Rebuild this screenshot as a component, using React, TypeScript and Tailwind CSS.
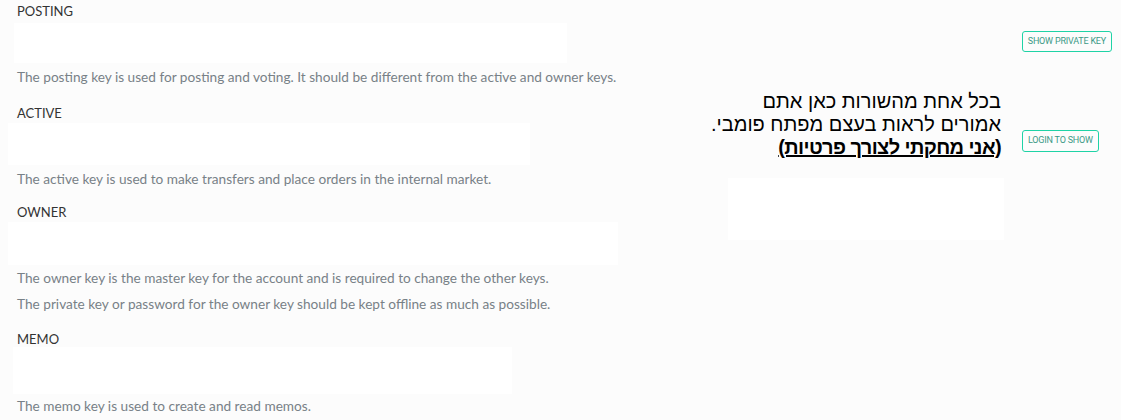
const Label = ({ children, className = '' }: { children: React.ReactNode; className?: string }) => (
  <div className={`pl-[17px] text-[13px] leading-[16px] text-[#333] ${className}`}>{children}</div>
);

const Desc = ({ children, className = '' }: { children: React.ReactNode; className?: string }) => (
  <p className={`pl-[17px] text-[13.65px] leading-[18px] text-[#788187] ${className}`}>{children}</p>
);

export default function App() {
  return (
    <div className="flex h-[420px] w-[1121px] bg-[#fcfcfc] font-['Lato',sans-serif] overflow-hidden">
      <div className="flex w-[640px] flex-col">
        <Label className="mt-[3px]">POSTING</Label>
        <div className="ml-[14px] mt-[4px] h-[40px] w-[553px] bg-white" />
        <Desc className="mt-[5px]">
          The posting key is used for posting and voting. It should be different from the active and owner keys.
        </Desc>
        <Label className="mt-[19px]">ACTIVE</Label>
        <div className="ml-[8px] mt-[2px] h-[42px] w-[522px] bg-white" />
        <Desc className="mt-[5px]">The active key is used to make transfers and place orders in the internal market.</Desc>
        <Label className="mt-[16px]">OWNER</Label>
        <div className="ml-[8px] mt-[2px] h-[43px] w-[610px] bg-white" />
        <Desc className="mt-[4px]">The owner key is the master key for the account and is required to change the other keys.</Desc>
        <Desc className="mt-[8px]">The private key or password for the owner key should be kept offline as much as possible.</Desc>
        <Label className="mt-[18px]">MEMO</Label>
        <div className="ml-[13px] h-[47px] w-[499px] bg-white" />
        <Desc className="mt-[3px]">The memo key is used to create and read memos.</Desc>
      </div>

      <div className="flex flex-1 flex-col">
        <div className="mt-[31px] flex justify-end pr-[9px]">
          <button className="h-[21px] rounded-[3px] border border-[#1fd3a6] px-[5px] font-['Roboto',sans-serif] text-[9px] tracking-[-0.2px] text-[#3b9a86]">
            SHOW PRIVATE KEY
          </button>
        </div>
        <div className="mt-[38px] flex">
          <div className="flex w-[361px] flex-col items-end">
            <div
              dir="rtl"
              className="font-['Liberation_Sans','Noto_Sans',sans-serif] text-[20px] leading-[23px] text-black"
            >
              בכל אחת מהשורות כאן אתם
              <br />
              אמורים לראות בעצם מפתח פומבי.
              <br />
              <a href="#" className="font-bold underline tracking-[-0.6px]">(אני מחקתי לצורך פרטיות)</a>
            </div>
            <div className="mt-[19px] mr-[-3px] h-[62px] w-[276px] bg-white" />
          </div>
          <div className="ml-[21px] mt-[35px]">
            <button className="h-[22px] rounded-[3px] border border-[#1fd3a6] px-[5px] font-['Roboto',sans-serif] text-[9px] tracking-[-0.2px] text-[#3b9a86]">
              LOGIN TO SHOW
            </button>
          </div>
        </div>
      </div>
    </div>
  );
}
